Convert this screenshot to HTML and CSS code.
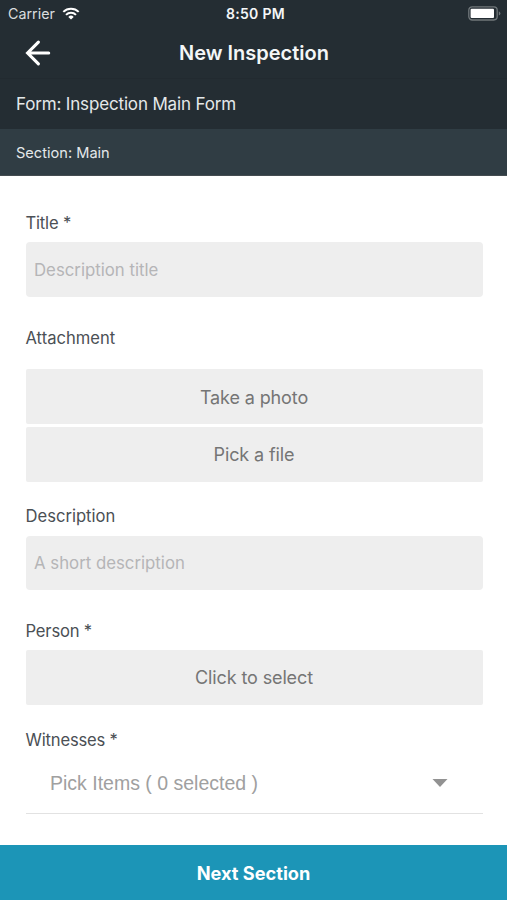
FILE: index.html
```html
<!DOCTYPE html>
<html lang="en">
<head>
<meta charset="utf-8">
<title>New Inspection</title>
<link rel="stylesheet" href="styles.css">
</head>
<body>
<div class="screen">
  <header class="header">
    <div class="status">
      <div class="carrier">
        <span class="carrier-name">Carrier</span>
        <svg class="wifi" viewBox="0 0 18 13" width="18" height="13">
          <path d="M1.3 4.9a11 11 0 0 1 15.4 0M4 7.9a7.1 7.1 0 0 1 10 0" fill="none" stroke="#fff" stroke-width="2"/>
          <path d="M9 12.6 6.3 9.9a3.9 3.9 0 0 1 5.4 0z" fill="#fff"/>
        </svg>
      </div>
      <span class="time">8:50 PM</span>
      <svg class="battery" viewBox="0 0 33 15" width="33" height="15">
        <rect x=".8" y=".8" width="28.4" height="13.2" rx="3.4" fill="none" stroke="#70777a" stroke-width="1.3"/>
        <rect x="2.6" y="2.7" width="23.4" height="9.4" rx="1" fill="#fff"/>
        <path d="M30.8 5.2q1.6.7 1.6 2.2t-1.6 2.2z" fill="#70777a"/>
      </svg>
    </div>
    <div class="nav">
      <svg class="back" viewBox="0 0 26 26" width="26" height="26">
        <path d="M23.7 13H3M13.4 2.2 2.6 13l10.8 10.8" fill="none" stroke="#fff" stroke-width="3.1" stroke-linecap="round"/>
      </svg>
      <h1 class="title">New Inspection</h1>
    </div>
    <div class="form-name"><span>Form: Inspection Main Form</span></div>
    <div class="section-name"><span>Section: Main</span></div>
  </header>
  <main class="fields">
    <section class="field field-title">
      <div class="label required"><span>Title *</span></div>
      <div class="input"><span>Description title</span></div>
    </section>
    <section class="field field-attachment">
      <div class="label"><span>Attachment</span></div>
      <div class="actions">
        <div class="button"><span>Take a photo</span></div>
        <div class="button"><span>Pick a file</span></div>
      </div>
    </section>
    <section class="field field-description">
      <div class="label"><span>Description</span></div>
      <div class="input"><span>A short description</span></div>
    </section>
    <section class="field field-person">
      <div class="label required"><span>Person *</span></div>
      <div class="button"><span>Click to select</span></div>
    </section>
    <section class="field field-witnesses">
      <div class="label required"><span>Witnesses *</span></div>
      <div class="select">
        <span>Pick Items ( 0 selected )</span>
        <svg viewBox="0 0 16 8" width="16" height="8"><path d="M.5 0h15L8 8z" fill="#929292"/></svg>
      </div>
    </section>
  </main>
  <footer class="next"><span>Next Section</span></footer>
</div>
</body>
</html>
```

FILE: styles.css
```css
* { box-sizing: border-box; }
body { margin: 0; background: #fff; font-family: Inter, "Liberation Sans", sans-serif; }
.screen { width: 507px; height: 900px; display: flex; flex-direction: column; overflow: hidden; }
.header { background: #242d33; color: #f4f6f7; }
.status { height: 28px; display: grid; grid-template-columns: 1fr auto 1fr; align-items: center; padding: 0 6px 1px 8px; }
.carrier { display: flex; align-items: center; gap: 7px; font-size: 14.3px; color: #d9dddf; }
.time { padding-left: 2px; font-size: 14px; font-weight: 600; letter-spacing: .3px; }
.battery { justify-self: end; }
.nav { height: 50px; display: grid; grid-template-columns: 26px 1fr 26px; align-items: center; padding: 0 24px 1px 25px; }
.title { margin: 0; text-align: center; font-size: 20px; font-weight: 600; }
.form-name { height: 51px; display: flex; align-items: center; padding: 0 16px; font-size: 17px; letter-spacing: -.16px; border-top: 1px solid #222a30; color: #e4e8ea; }
.section-name { height: 47px; display: flex; align-items: center; padding: 1px 16px 0; font-size: 14.6px; background: #303d44; color: #e4e8ea; border-bottom: 1px solid #444c50; }
.fields { flex: 1; padding: 37px 24.5px 0 25.5px; display: flex; flex-direction: column; }
.field { display: flex; flex-direction: column; gap: 9px; }
.label { height: 20px; display: flex; align-items: center; font-size: 16.6px; color: #4b5055; }
.required { letter-spacing: -.18px; }
.input { height: 55px; display: flex; align-items: center; padding: 1px 8px 0 8.5px; border-radius: 4px; background: #eee; color: #b5b5b7; font-size: 16.8px; }
.button { height: 55px; display: flex; align-items: center; justify-content: center; padding-top: 1px; border-radius: 2px; background: #eee; color: #757575; font-size: 18px; letter-spacing: -.12px; }
.button + .button, .field-person .button { padding: 0 0 1px; }
.actions { display: flex; flex-direction: column; gap: 3px; }
.field-attachment { margin-top: 31px; gap: 21px; }
.field-description { margin-top: 24px; gap: 10px; }
.field-description .input { height: 54px; padding-top: 0; }
.field-person { margin-top: 31px; }
.field-witnesses { margin-top: 25px; gap: 0; }
.select { height: 64px; display: flex; align-items: center; justify-content: space-between; padding: 3px 35px 0 24.5px; border-bottom: 1px solid #e2e2e2; font-family: "Liberation Sans", Arial, sans-serif; font-size: 19.5px; color: #a0a0a0; }
.next { height: 55px; display: flex; align-items: center; justify-content: center; background: #1c95b7; color: #fff; font-size: 18.2px; font-weight: 700; }
```
